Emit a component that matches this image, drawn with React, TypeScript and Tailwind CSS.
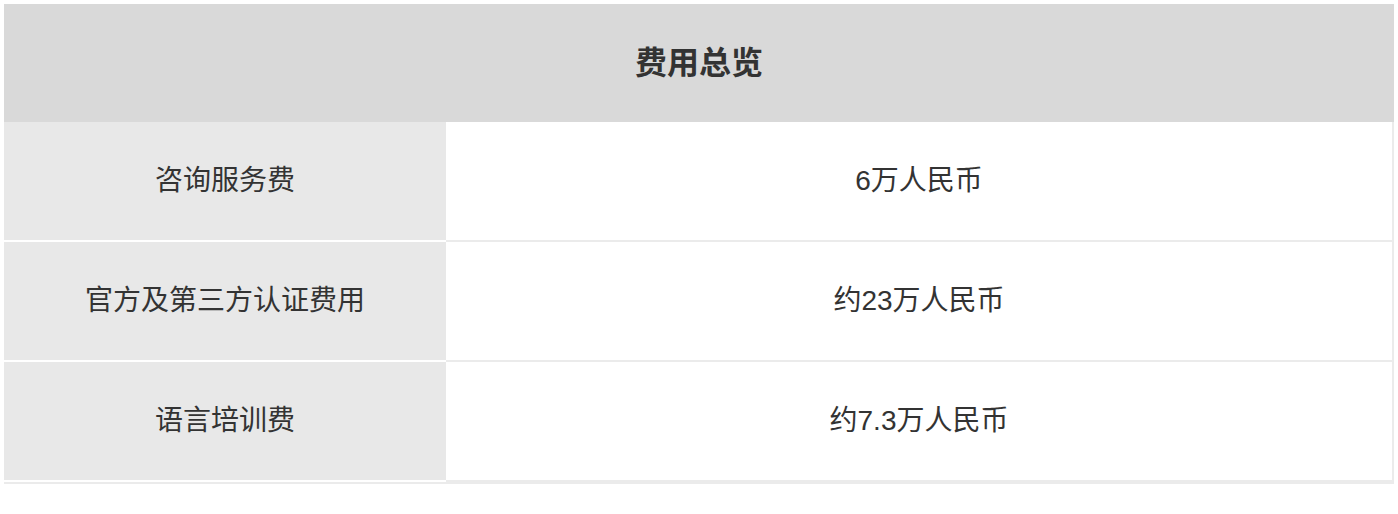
const rows = [
  { label: '咨询服务费', value: '6万人民币' },
  { label: '官方及第三方认证费用', value: '约23万人民币' },
  { label: '语言培训费', value: '约7.3万人民币' },
];

export default function App() {
  return (
    <div className="min-h-screen bg-white p-1 font-['Liberation_Sans','Noto_Sans_CJK_SC',sans-serif] text-[#333]">
      <div className="w-[1390px] border-b-2 border-[#ebebeb]">
        <div className="flex h-[118px] items-center justify-center bg-[#d9d9d9] text-[32px] font-bold">
          费用总览
        </div>
        {rows.map((row) => (
          <div key={row.label} className="flex h-[120px]">
            <div className="flex w-[442px] items-center justify-center border-b-2 border-white bg-[#e8e8e8] text-[28px]">
              {row.label}
            </div>
            <div className="flex flex-1 items-center justify-center border-r-2 border-b-2 border-[#ebebeb] bg-white text-[28px]">
              {row.value}
            </div>
          </div>
        ))}
      </div>
    </div>
  );
}
